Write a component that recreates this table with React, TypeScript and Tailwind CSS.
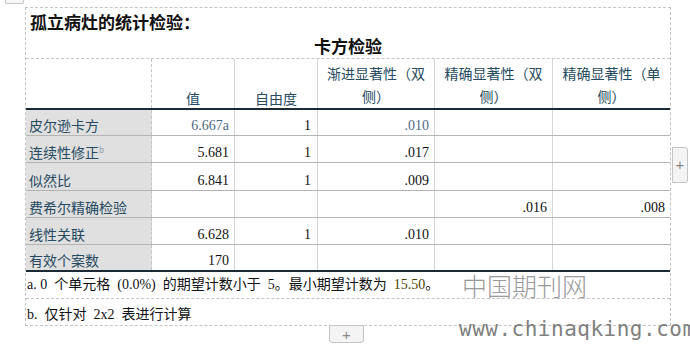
import type { ReactNode } from "react";

const cols = "grid grid-cols-[126px_83px_83px_117px_118px_117px]";
const cjk = "font-['Noto_Sans_CJK_SC',sans-serif]";
const num = "font-['Liberation_Serif','Noto_Sans_CJK_SC',serif]";

type Row = {
    label: ReactNode;
    cells: (ReactNode | null)[];
    h: string;
    last?: boolean;
};

const rows: Row[] = [
    { label: "皮尔逊卡方", cells: [<span className="text-[#4f6b82]">6.667a</span>, "1", <span className="text-[#4f6b82]">.010</span>, null, null], h: "h-[26px]" },
    {
        label: (
            <>
                连续性修正<sup className="text-[8px] text-[#8a9aa8] -top-[5px]">b</sup>
            </>
        ),
        cells: ["5.681", "1", ".017", null, null],
        h: "h-[27px]",
    },
    { label: "似然比", cells: ["6.841", "1", ".009", null, null], h: "h-[28px]" },
    { label: "费希尔精确检验", cells: [null, null, null, ".016", ".008"], h: "h-[27px]" },
    { label: "线性关联", cells: ["6.628", "1", ".010", null, null], h: "h-[27px]" },
    { label: "有效个案数", cells: ["170", null, null, null, null], h: "h-[27px]", last: true },
];

const headers = ["值", "自由度", ["渐进显著性（双", "侧）"], ["精确显著性（双", "侧）"], ["精确显著性（单", "侧）"]];

export default function App() {
    return (
        <div className="relative w-[690px] h-[344px] overflow-hidden bg-white">
            {/* top-left tab */}
            <div className="absolute left-[5px] -top-[7px] w-[19px] h-[11px] border border-[#c8c8c8] rounded-b-[2px] bg-[#f6f6f6]" />

            <div className="pl-[25px] pt-[7px]">
                <div className="w-[646px] border border-dashed border-[#c4c4c4]">
                    {/* Title */}
                    <div className={`h-[51px] border-b border-dashed border-[#c4c4c4] pt-[2px] ${cjk} text-[17px] leading-[24px] font-bold text-[#111]`}>
                        <div className="pl-[4px]">孤立病灶的统计检验：</div>
                        <div className="text-center">卡方检验</div>
                    </div>

                    {/* Header */}
                    <div className={`${cols} h-[51px] border-b-2 border-[#1c2a36] ${cjk} text-[14px] text-[#264a60]`}>
                        <div className="border-r border-dashed border-[#c4c4c4]" />
                        {headers.map((hd, i) => (
                            <div
                                key={i}
                                className={`flex flex-col items-center justify-end ${i < 4 ? "border-r border-[#d6d6d6]" : ""} ${typeof hd === "string" ? "leading-[20px]" : "leading-[23px]"}`}
                            >
                                {typeof hd === "string" ? <span>{hd}</span> : hd.map((l) => <span key={l}>{l}</span>)}
                            </div>
                        ))}
                    </div>

                    {/* Body */}
                    {rows.map((r, ri) => (
                        <div
                            key={ri}
                            className={`${cols} ${r.h} ${r.last ? "border-b-2 border-[#1c2a36]" : "border-b border-[#b4b4b4]"}`}
                        >
                            <div className={`bg-[#e0e0e0] border-r border-dashed border-[#c4c4c4] flex items-end pl-[3px] pb-[1px] ${cjk} text-[14px] leading-[18px] text-[#264a60]`}>
                                <span>{r.label}</span>
                            </div>
                            {r.cells.map((c, ci) => (
                                <div
                                    key={ci}
                                    className={`flex items-end justify-end ${ci === 1 ? "pr-[6px]" : "pr-[5px]"} ${ci < 4 ? "border-r border-[#d6d6d6]" : ""} ${num} text-[14px] leading-[18px] text-[#111]`}
                                >
                                    {c}
                                </div>
                            ))}
                        </div>
                    ))}

                    {/* Footnotes */}
                    <div className={`h-[27px] border-b border-dashed border-[#c4c4c4] flex items-center pl-[1px] ${num} text-[14px] leading-[18px] text-[#111] whitespace-pre`}>
                        a. 0  个单元格  (0.0%)  的期望计数小于  5。最小期望计数为  <span className="text-[#4a4200]">15.50</span>。
                    </div>
                    <div className={`h-[26px] flex items-end pb-[1px] pl-[1px] ${num} text-[14px] leading-[18px] text-[#111] whitespace-pre`}>
                        b.  仅针对  2x2  表进行计算
                    </div>
                </div>
            </div>

            {/* side + button */}
            <div className="absolute left-[672px] top-[147px] w-[16px] h-[36px] border border-[#c4c4c4] rounded-r-[3px] bg-[#f4f4f4] flex items-center justify-center text-[#888] text-[15px] font-['Liberation_Sans',sans-serif]">
                +
            </div>
            {/* bottom + button */}
            <div className="absolute left-[329px] top-[325px] w-[35px] h-[18px] border border-[#c4c4c4] rounded-b-[3px] bg-[#f4f4f4] flex items-center justify-center text-[#888] text-[15px] leading-none font-['Liberation_Sans',sans-serif]">
                +
            </div>

            {/* watermark */}
            <div className={`absolute left-[462px] top-[269px] ${cjk} font-light text-[25px] leading-[32px] text-[#9a9a9a]`}>
                中国期刊网
            </div>
            <div className="absolute left-[459px] top-[314px] font-['DejaVu_Sans_Mono',monospace] text-[21px] leading-[30px] tracking-[0.5px] text-[#808080] whitespace-nowrap">
                www.chinaqking.com
            </div>
        </div>
    );
}
